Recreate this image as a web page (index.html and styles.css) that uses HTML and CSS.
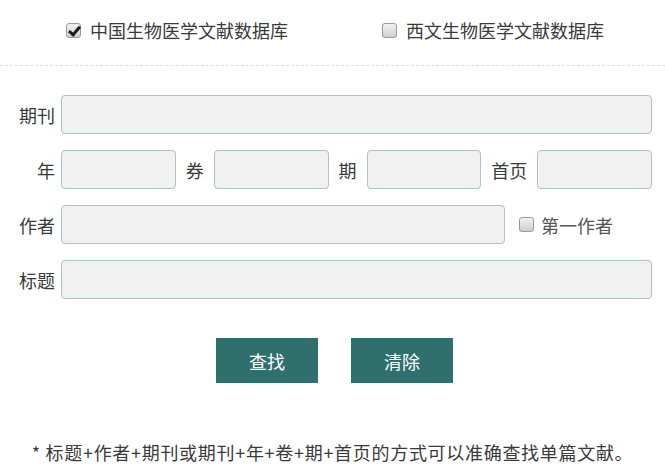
FILE: index.html
```html
<!DOCTYPE html>
<html lang="zh-CN">
<head>
    <meta charset="UTF-8">
    <meta name="viewport" content="width=device-width, initial-scale=1.0">
    <title>文献检索</title>
    <link rel="stylesheet" href="styles.css">
</head>
<body>
    <div class="db-select">
        <label class="check"><input type="checkbox" checked> 中国生物医学文献数据库</label>
        <label class="check"><input type="checkbox"> 西文生物医学文献数据库</label>
    </div>
    <form class="search-form">
        <div class="row">
            <label class="name">期刊</label>
            <input type="text" class="field">
        </div>
        <div class="row">
            <label class="name">年</label>
            <input type="text" class="field">
            <label class="inline">券</label>
            <input type="text" class="field">
            <label class="inline">期</label>
            <input type="text" class="field">
            <label class="inline">首页</label>
            <input type="text" class="field">
        </div>
        <div class="row">
            <label class="name">作者</label>
            <input type="text" class="field">
            <label class="check first-author"><input type="checkbox">第一作者</label>
        </div>
        <div class="row">
            <label class="name">标题</label>
            <input type="text" class="field">
        </div>
        <div class="buttons">
            <button type="button" class="btn">查找</button>
            <button type="reset" class="btn">清除</button>
        </div>
    </form>
    <p class="tip">* 标题+作者+期刊或期刊+年+卷+期+首页的方式可以准确查找单篇文献。</p>
</body>
</html>
```

FILE: styles.css
```css
body {
    margin: 0;
    font-family: "Noto Sans CJK SC", "Noto Sans", sans-serif;
    font-size: 18px;
    color: #3a3a3a;
    background: #fff;
}
.db-select {
    display: flex;
    gap: 94px;
    padding: 18px 0 23px 66px;
    border-bottom: 1px dashed #ddd;
}
.check {
    display: flex;
    align-items: center;
    line-height: 24px;
}
.check input {
    appearance: none;
    width: 15px;
    height: 15px;
    margin: 0 9px 0 0;
    border: 1px solid #9a9a9a;
    border-radius: 3px;
    background: linear-gradient(#f2f2f2, #cfcfcf);
    position: relative;
}
.check input:checked::after {
    content: "";
    position: absolute;
    left: 4px;
    top: 0;
    width: 4px;
    height: 9px;
    border: solid #1a1a1a;
    border-width: 0 3px 3px 0;
    transform: rotate(40deg);
}
.search-form {
    padding: 29px 13px 0 0;
}
.row {
    display: flex;
    align-items: center;
    margin-bottom: 16px;
}
.name {
    width: 55px;
    margin-right: 6px;
    text-align: right;
    flex: none;
}
.inline {
    margin: 0 10px;
    flex: none;
}
.field {
    flex: 1;
    min-width: 0;
    height: 39px;
    box-sizing: border-box;
    border: 1px solid #a9c4c2;
    border-radius: 4px;
    background: #f1f1f1;
    font-size: 16px;
    padding: 0 8px;
}
.first-author {
    margin: 0 39px 0 14px;
    color: #555;
}
.first-author input {
    margin-right: 7px;
}
.buttons {
    display: flex;
    justify-content: center;
    gap: 33px;
    margin-top: 39px;
    padding-left: 17px;
}
.btn {
    width: 102px;
    height: 45px;
    border: none;
    background: #2f6f6e;
    color: #fff;
    font-family: inherit;
    font-size: 18px;
    cursor: pointer;
}
.btn:hover {
    background: #275d5c;
}
.tip {
    margin: 57px 0 0;
    text-align: center;
    line-height: 24px;
    letter-spacing: 0.7px;
}
```
